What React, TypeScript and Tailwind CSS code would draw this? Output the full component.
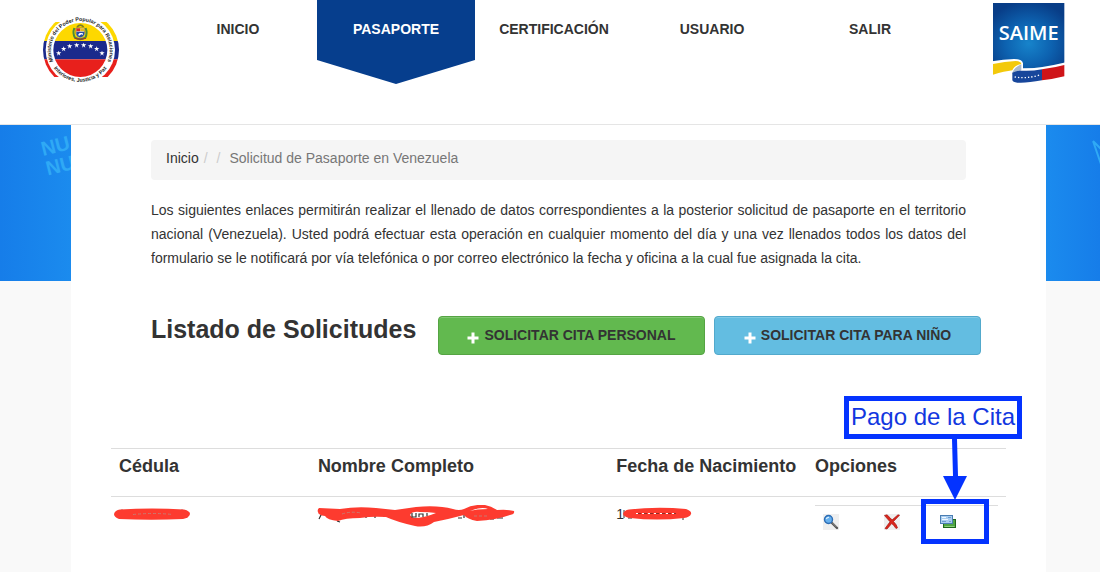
import { ReactNode } from "react";
import clsx from "clsx";

const navItems = ["INICIO", "PASAPORTE", "CERTIFICACIÓN", "USUARIO", "SALIR"];

const starPositions = [
    [116, 160], [131, 147], [149, 139], [170, 136],
    [191, 136], [212, 139], [230, 147], [246, 160],
];

function MinistryLogo() {
    return (
        <svg viewBox="60 42 240 210" className="w-[80px] h-[70px]" role="img" aria-label="Ministerio">
            <defs>
                <clipPath id="disk"><circle cx="181" cy="150" r="81" /></clipPath>
                <clipPath id="outer"><circle cx="183" cy="150" r="114" /></clipPath>
                <path id="topArc" d="M106 197 A88 88 0 1 1 256 197" />
                <path id="bottomArc" d="M97 197 A97 97 0 0 0 265 197" />
            </defs>
            <g clipPath="url(#outer)">
                <rect x="66" y="66" width="234" height="57" fill="#fdd800" />
                <rect x="66" y="123" width="234" height="55" fill="#1b2a8c" />
                <rect x="66" y="178" width="234" height="53" fill="#e8201c" />
            </g>
            <circle cx="181" cy="150" r="104" fill="#fff" />
            <g clipPath="url(#disk)">
                <rect x="96" y="60" width="170" height="63" fill="#fdd800" />
                <rect x="96" y="123" width="170" height="55" fill="#1b2a8c" />
                <rect x="96" y="178" width="170" height="60" fill="#e8201c" />
            </g>
            {/* escudo */}
            <path d="M163 84 Q157 100 165 113 Q180 122 196 113 Q203 100 197 84" fill="none" stroke="#4b8b3b" strokeWidth="6" />
            <path d="M168 84 H194 V101 Q191 112 181 113 Q170 112 168 101 Z" fill="#fff" stroke="#795d20" strokeWidth="2" />
            <rect x="169" y="85" width="12" height="9" fill="#d62b22" />
            <rect x="181" y="85" width="12" height="9" fill="#e9bd1f" />
            <path d="M169 95 H193 V101 Q190 111 181 112 Q171 111 169 101 Z" fill="#254fa0" />
            <path d="M174 105 L179 99 L188 99 L189 105 L184 103 L178 107 Z" fill="#fff" />
            <path d="M171 81 Q181 70 191 81" fill="none" stroke="#7c7c25" strokeWidth="5" />
            <path d="M164 115 Q181 121 198 115" fill="none" stroke="#b42a28" strokeWidth="3" />
            {starPositions.map(([x, y]) => (
                <polygon
                    key={x}
                    transform={`translate(${x} ${y})`}
                    points="0,-8 2,-3 8,-3 3,1 5,7 0,3 -5,7 -3,1 -8,-3 -2,-3"
                    fill="#fff"
                />
            ))}
            <g fontFamily="Liberation Sans, sans-serif" fontWeight="700" fontSize="16" fill="#222" textAnchor="middle">
                <text><textPath href="#topArc" startOffset="50%">Ministerio del Poder Popular para Relaciones</textPath></text>
                <text><textPath href="#bottomArc" startOffset="50%">Interiores, Justicia y Paz</textPath></text>
            </g>
        </svg>
    );
}

function SaimeLogo() {
    return (
        <svg viewBox="66 0 222 255" className="w-[74px] h-[85px]" role="img" aria-label="SAIME">
            <defs>
                <radialGradient id="saimeBlue" cx="50%" cy="62%" r="65%">
                    <stop offset="0" stopColor="#1784cb" />
                    <stop offset="0.5" stopColor="#0d62b0" />
                    <stop offset="1" stopColor="#083d87" />
                </radialGradient>
            </defs>
            <rect x="69" y="9" width="214" height="196" fill="url(#saimeBlue)" />
            <path d="M66 184 Q100 178 132 177 Q156 177 159 190 V206 Q210 206 288 187 V255 H66 Z" fill="#fff" />
            <path d="M69 192 Q105 184 137 183 Q153 184 154 192 Q132 197 127 211 Q104 214 69 224 Z" fill="#f3c90b" />
            <path d="M127 222 Q128 204 154 193 V211 Q140 211 127 222 Z" fill="#a9b9cc" />
            <path d="M127 218 Q148 209 154 212 Q184 214 216 208 V241 Q169 250 142 248 Q128 246 127 240 Z" fill="#17469b" />
            <path d="M216 208 Q254 203 283 195 V229 Q252 237 216 241 Z" fill="#cf1418" />
            <path d="M134 231 Q170 237 209 225" fill="none" stroke="#fff" strokeWidth="4" strokeDasharray="4 6" />
            <text x="176" y="119" textAnchor="middle" fontFamily="Open Sans, sans-serif" fontWeight="600" fontSize="60" fill="#fff">SAIME</text>
        </svg>
    );
}

function PlusIcon() {
    return (
        <svg viewBox="0 0 12 12" className="w-3 h-3 mt-[6px]" aria-hidden="true">
            <path d="M4.500 0.500h3V4.500h4v3h-4v4h-3v-4h-4v-3h4z" fill="#fff" />
        </svg>
    );
}

function ActionButton({ className, children }: { className: string; children: ReactNode }) {
    return (
        <button
            type="button"
            className={clsx("flex items-center justify-center gap-[5px] w-[267px] h-[39px] pb-[2px] shrink-0 rounded border text-sm font-bold text-[#333] shadow-[inset_0_1px_0_rgba(255,255,255,0.2)]", className)}
        >
            <PlusIcon />
            {children}
        </button>
    );
}

function ViewIcon() {
    return (
        <svg viewBox="0 0 16 16" className="w-4 h-4 bg-[#efefef]" aria-hidden="true">
            <path d="M8.5 8.5 L14 14" stroke="#555" strokeWidth="2.4" strokeLinecap="round" />
            <path d="M9 8.5 L13.5 13" stroke="#aaa" strokeWidth="0.7" />
            <circle cx="5.5" cy="5.5" r="4" fill="#66b0ee" stroke="#2e6db4" strokeWidth="1.4" />
            <path d="M3.3 5 Q4 3.2 6 3.3" stroke="#d8efff" strokeWidth="1.3" fill="none" />
        </svg>
    );
}

function DeleteIcon() {
    return (
        <svg viewBox="0 0 16 16" className="w-4 h-4 bg-[#efefef]" aria-hidden="true">
            <path d="M0.5 1.5 L3 0.8 Q7 4.5 8 6 L14 0.8 L15.5 1.2 L9.5 7.5 Q12.5 10.5 13.5 13.8 L12 14.5 Q9.5 11 7.7 9.5 L3 15 L1 14.5 L6 7.8 Z" fill="#d9261c" stroke="#a91612" strokeWidth="0.7" />
        </svg>
    );
}

function PaymentIcon() {
    return (
        <svg viewBox="0 0 16 16" className="w-4 h-4" aria-hidden="true">
            <rect x="3.5" y="5.5" width="12" height="8" fill="#4fa544" stroke="#1f661d" />
            <path d="M4.5 12.5h10" stroke="#8bd277" />
            <rect x="0.5" y="1.5" width="12" height="8" fill="#a9cdf0" stroke="#4a7db2" />
            <path d="M2 3.5h4M2 5.500h6" stroke="#eef7ff" />
            <path d="M8 3.500h3M2 7.500h4M9 7.500h2" stroke="#6b9bcc" />
        </svg>
    );
}

function Banner({ children, className }: { children: ReactNode; className: string }) {
    return <div className={clsx("h-[156px] shrink-0 overflow-hidden", className)}>{children}</div>;
}

export default function App() {
    return (
        <div className="flex flex-col min-h-screen bg-[#f9f9f9] font-['Liberation_Sans',Arial,sans-serif] text-sm text-[#333]">
            <header className="flex h-[125px] bg-white border-b border-[#e5e5e5]">
                <div className="w-[159px] shrink-0 pl-10 pt-[14px]"><MinistryLogo /></div>
                <nav className="grid grid-cols-5 grow">
                    {navItems.map((item) => (
                        <a
                            key={item}
                            href="#"
                            className={clsx(
                                "h-[84px] pt-[19px] text-center leading-5 font-bold",
                                item === "PASAPORTE" && "bg-[#063e8d] text-white [clip-path:polygon(0_0,100%_0,100%_60px,50%_100%,0_60px)]"
                            )}
                        >
                            {item}
                        </a>
                    ))}
                </nav>
                <div className="w-[151px] shrink-0 pl-[43px]"><SaimeLogo /></div>
            </header>

            <div className="flex grow">
                <Banner className="w-[71px] bg-linear-to-r from-[#167de9] to-[#1b8bee]">
                    <svg viewBox="0 0 71 156" className="w-[71px] h-[156px]" aria-hidden="true">
                        <g fontFamily="Liberation Sans, sans-serif" fontWeight="700" fontSize="20" fill="#2fa9f5" transform="rotate(-14 43 31)">
                            <text x="43" y="31">NU</text>
                            <text x="43" y="51">NU</text>
                        </g>
                    </svg>
                </Banner>

                <main className="grow min-w-0 bg-white pt-[15px]">
                    <div className="px-20">
                        <nav aria-label="Ruta" className="flex h-10 px-[15px] pt-2 leading-5 bg-[#f5f5f5] rounded">
                            <a href="#">Inicio</a>
                            <span className="px-[5px] text-[#ccc]">/</span>
                            <span className="pl-1 pr-[9px] text-[#ccc]">/</span>
                            <span className="text-[#777]">Solicitud de Pasaporte en Venezuela</span>
                        </nav>
                        <p className="mt-[18px] leading-6 text-justify">
                            Los siguientes enlaces permitirán realizar el llenado de datos correspondientes a la posterior solicitud de pasaporte en el territorio nacional (Venezuela). Usted podrá efectuar esta operación en cualquier momento del día y una vez llenados todos los datos del formulario se le notificará por vía telefónica o por correo electrónico la fecha y oficina a la cual fue asignada la cita.
                        </p>
                    </div>

                    <div className="flex mt-[46px] pl-20">
                        <h1 className="w-[287px] shrink-0 text-[25px] leading-[26px] font-bold whitespace-nowrap">Listado de Solicitudes</h1>
                        <div className="flex gap-[9px]">
                            <ActionButton className="bg-[#62b94f] border-[#55a443]">SOLICITAR CITA PERSONAL</ActionButton>
                            <ActionButton className="bg-[#63bde1] border-[#52a9cc]">SOLICITAR CITA PARA NIÑO</ActionButton>
                        </div>
                    </div>

                    <div className="relative mt-[93px] mx-10">
                        <table className="w-full table-fixed text-left">
                            <thead>
                                <tr className="h-12 border-t border-[#ddd] align-top text-lg leading-5">
                                    <th className="w-2/9 px-2 pt-[7px]">Cédula</th>
                                    <th className="w-3/9 px-2 pt-[7px]">Nombre Completo</th>
                                    <th className="w-2/9 px-2 pt-[7px] whitespace-nowrap">Fecha de Nacimiento</th>
                                    <th className="w-2/9 px-2 pt-[7px]">Opciones</th>
                                </tr>
                            </thead>
                            <tbody>
                                <tr className="border-t border-[#ddd] align-top leading-5">
                                    <td className="pl-[2px] pt-2">
                                        <svg viewBox="0 0 78 20" className="w-[78px] h-5" role="img" aria-label="Dato oculto">
                                            <path d="M9 4.500v9.500M69 4.500v9.500" stroke="#333" />
                                            <path d="M7 4.500 Q39 2.500 71 4.500 Q77 6 77 9 Q76 13 70 14 Q39 15.500 6 14 Q1 12 1 9 Q2 5 7 4.500Z" fill="#fd3b2f" />
                                            <path d="M20 9.500 Q40 7.500 60 9.500" fill="none" stroke="#c9796f" strokeDasharray="3 2" />
                                        </svg>
                                    </td>
                                    <td className="pl-[7px] pt-2">
                                        <svg viewBox="0 0 198 26" className="w-[198px] h-[26px]" role="img" aria-label="Nombre oculto">
                                            <path d="M2 14 l3 -6 M20 16 l3 1 M49 13 v-7 M58 13 v-8 M67 12 v-8 M75 12 v-7 M141 13 h4 M147 13 v-7 M173 14 h4 M180 13 h6" stroke="#333" strokeWidth="1.200" fill="none" />
                                            <path d="M2 3 L23 4 Q40 1 59 3 L78 5 L99 2 Q121 0 136 4 Q142 6 147 4 Q156 -1 168 0 Q174 1 180 5 Q190 4 197 6 Q198 9 193 10 Q179 15 160 16 Q150 14 147 10 Q132 14 117 17 Q109 23 98 21 Q80 17 69 12 Q56 11 43 13 Q28 13 21 16 Q10 15 8 11 Q1 10 1 7 Q0 5 2 3Z" fill="#fd3b2f" />
                                            <path d="M93 10 Q95 6 103 7 Q112 7 119 8 Q107 13 97 13 Q94 12 93 10Z M153 6 Q165 1 171 4 Q159 4 153 6Z" fill="#fff" />
                                            <path d="M95 8 v4 h4 v-4 M102 12 v-3 h4 v3 M110 8 v3" stroke="#333" strokeWidth="1.200" fill="none" />
                                            <path d="M25 9 Q34 6 44 8 M157 11 H170" fill="none" stroke="#c9796f" strokeDasharray="3 2" />
                                        </svg>
                                    </td>
                                    <td className="px-2 pt-[7px]">
                                        <div className="flex">
                                            <span>1</span>
                                            <svg viewBox="0 0 70 20" className="w-[70px] h-5 mt-px -ml-[2px]" role="img" aria-label="Fecha oculta">
                                                <path d="M2 5v8M6 13h4M61 13v2" stroke="#333" />
                                                <path d="M7 4.500 Q35 1.500 64 4 Q70 6 69 9 Q68 12 62 13 Q35 16 8 13 Q2 12 1 9 Q2 5 7 4.500Z" fill="#fd3b2f" />
                                                <path d="M14 8.500 H56" stroke="#fff" strokeDasharray="2 4" />
                                                <path d="M16 8.500 H54" stroke="#8f2e27" strokeDasharray="3 3" />
                                            </svg>
                                        </div>
                                    </td>
                                    <td className="px-2 pt-2">
                                        <div className="grid grid-cols-[61px_56px_1fr] border-t border-[#ddd] px-2 pt-2">
                                            <a href="#" aria-label="Ver"><ViewIcon /></a>
                                            <a href="#" aria-label="Eliminar"><DeleteIcon /></a>
                                            <a href="#" aria-label="Pago de la cita"><PaymentIcon /></a>
                                        </div>
                                    </td>
                                </tr>
                            </tbody>
                        </table>

                        {/* nota sobre el botón de pago */}
                        <div className="absolute -top-[52px] -right-4 w-[178px] h-[43px] border-5 border-[#0433ff] bg-white text-center text-2xl leading-8 whitespace-nowrap text-[#1237e0]">
                            Pago de la Cita
                        </div>
                        <svg viewBox="0 0 26 62" className="absolute -top-[9px] right-[38px] w-[26px] h-[62px]" aria-hidden="true">
                            <path d="M10 0h5L16 37H25L13 61L1 37H11Z" fill="#0433ff" />
                        </svg>
                        <div className="absolute top-[51px] right-[17px] w-[68px] h-[45px] border-5 border-[#0433ff] pointer-events-none" />
                    </div>
                </main>

                <Banner className="w-[54px] bg-linear-to-r from-[#1b8bee] to-[#167de9]">
                    <svg viewBox="0 0 54 156" className="w-[54px] h-[156px]" aria-hidden="true">
                        <path d="M47 16 L56 42 M47 16 L56 25" stroke="#2fa9f5" strokeWidth="2" fill="none" />
                    </svg>
                </Banner>
            </div>
        </div>
    );
}
